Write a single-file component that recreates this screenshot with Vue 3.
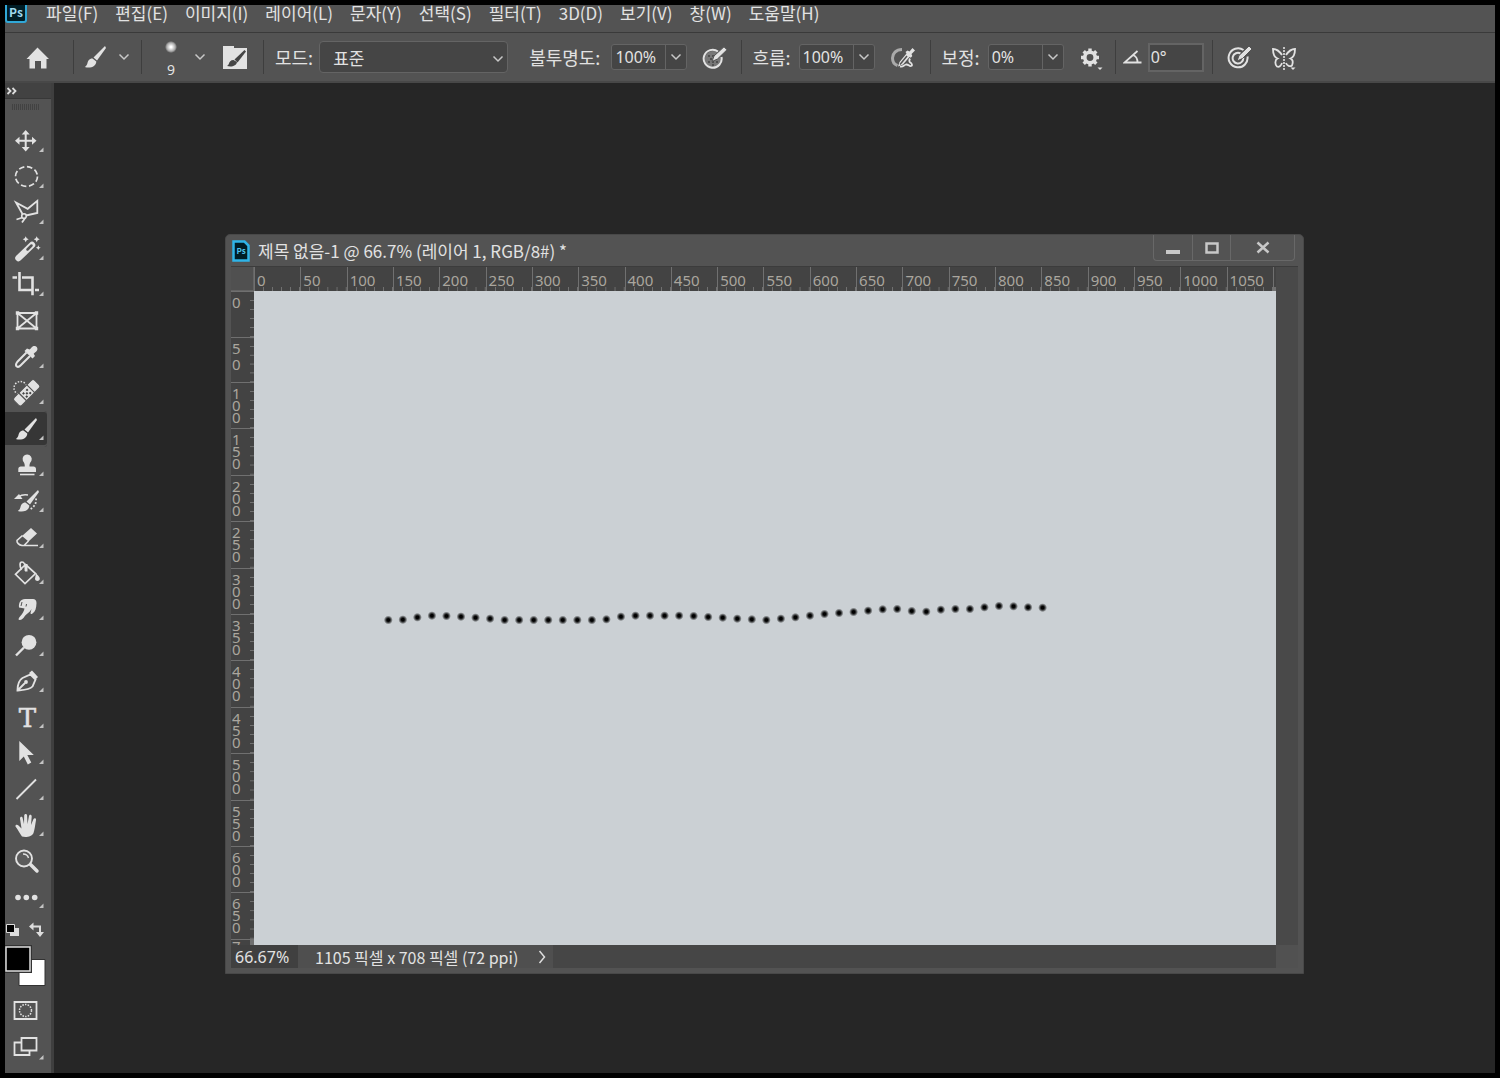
<!-- src/App.vue -->
<template>
  <div class="app">
    <nav class="menu-bar">
      <svg class="logo" viewBox="0 0 22 18">
        <rect x="1" y="-8" width="20" height="25" rx="2" fill="#001d26" stroke="#31a8d8" stroke-width="2" />
        <text x="11" y="12" text-anchor="middle" font-size="12" font-weight="700" fill="#9fd8ee">Ps</text>
      </svg>
      <button v-for="m in menus" :key="m" class="menu-item">{{ m }}</button>
    </nav>

    <div class="options-bar">
      <div class="group home">
        <button class="icon-btn" aria-label="홈">
          <svg class="icon" viewBox="0 0 26 26"><path d="M13.500 3.500 25 15h-2.500v9.500H17V17h-6v7.500H5.500V15H2.500z" /></svg>
        </button>
      </div>
      <div class="group tool">
        <button class="icon-btn" aria-label="브러시">
          <svg class="icon" viewBox="8 5 26 26" v-html="BRUSH"></svg>
        </button>
        <button class="chev" aria-label="도구 사전 설정"><svg viewBox="0 0 12 8"><path d="M1.500 1.500 6 6l4.500-4.500" /></svg></button>
      </div>
      <div class="group preset">
        <button class="brush-size"><span class="dot"></span>9</button>
        <button class="chev" aria-label="브러시 사전 설정"><svg viewBox="0 0 12 8"><path d="M1.500 1.500 6 6l4.500-4.500" /></svg></button>
        <button class="icon-btn folder" aria-label="브러시 설정">
          <svg class="icon" viewBox="0 0 26 26">
            <path d="M1 2h11v2h13v21H1z" />
            <path d="M22.500 6 12.500 15.500l3 3L24 7.500z" fill="#444" />
            <path d="M11.500 16c-3 0-4 2-4.500 3.500-.5 1.300-1 2-2 2.500 4.500 1.300 9.500 0 10-4z" fill="#444" />
          </svg>
        </button>
      </div>
      <div class="group mode">
        <label for="mode">모드:</label>
        <span class="select-wrap">
          <select id="mode"><option>표준</option></select>
          <svg class="select-arrow" viewBox="0 0 12 8"><path d="M1.500 1.500 6 6l4.500-4.500" /></svg>
        </span>
        <label for="opacity" class="opacity-label">불투명도:</label>
        <span class="combo">
          <input id="opacity" v-model="opacity">
          <button class="chev" aria-label="불투명도 슬라이더"><svg viewBox="0 0 12 8"><path d="M1.500 1.500 6 6l4.500-4.500" /></svg></button>
        </span>
        <button class="icon-btn" aria-label="불투명도에 압력 사용">
          <svg class="icon" viewBox="0 0 26 26">
            <circle cx="11" cy="15.500" r="8.500" fill="#777" />
            <path d="M16 7.500a9 9 0 1 0 3.500 5.500" fill="none" stroke="currentColor" stroke-width="2" />
            <path d="M6 12h2m2 0h2m-4 3h2m-4 3h2m2 0h2m2 0h2m-6 3h2" stroke="#444" stroke-width="1.500" />
            <path d="M10 17.500 12 12 22 2.800l3 3L15.500 15z" stroke="#535353" />
          </svg>
        </button>
      </div>
      <div class="group flow">
        <label for="flow">흐름:</label>
        <span class="combo">
          <input id="flow" v-model="flow">
          <button class="chev" aria-label="흐름 슬라이더"><svg viewBox="0 0 12 8"><path d="M1.500 1.500 6 6l4.500-4.500" /></svg></button>
        </span>
        <button class="icon-btn" aria-label="에어브러시">
          <svg class="icon" viewBox="0 0 26 26">
            <path d="M12 5.500C6 5.500 2.500 9.500 2.500 14c0 4 2 6.500 5 7.500" fill="none" stroke="#aaa" stroke-width="3" />
            <path d="M8 22.500 9.500 18l7-8.500-1-1.500 2-1.500 2 1L22.500 4l2.500 2.500-3.500 3.500.8 2-1.500 1.700-1.300-.7L13 20.500z" />
            <path d="m10 20.500 7-8.500" stroke="#535353" stroke-width="1.500" />
            <path d="M10 22.500c3 1 4-1.500 6-2 2.500-.3 3 2 5 1.500s.5-3-.8-3.500c-1.200-.8-1.200-2-.2-4" fill="none" stroke="currentColor" stroke-width="1.800" />
          </svg>
        </button>
      </div>
      <div class="group smooth">
        <label for="smooth">보정:</label>
        <span class="combo">
          <input id="smooth" v-model="smoothing">
          <button class="chev" aria-label="보정 슬라이더"><svg viewBox="0 0 12 8"><path d="M1.500 1.500 6 6l4.500-4.500" /></svg></button>
        </span>
        <button class="icon-btn" aria-label="보정 옵션">
          <svg class="icon" viewBox="0 0 26 26">
            <circle cx="11" cy="13.500" r="5.200" fill="none" stroke="currentColor" stroke-width="3.600" />
            <path d="M11 4.500v3m0 12v3M2 13.500h3m12 0h3M4.700 7.200l2 2m8.600 8.600 2 2m0-12.600-2 2m-8.600 8.600-2 2" stroke="currentColor" stroke-width="3.400" />
            <path d="M18.500 23.500h5L21 26z" />
          </svg>
        </button>
      </div>
      <div class="group angle">
        <label for="angle" aria-label="브러시 각도">
          <svg class="angle-icon" viewBox="0 0 20 26">
            <path d="M14.500 7 1.500 18.500h17M10 11c3 1 4.500 4 4.500 7.500" fill="none" stroke="currentColor" stroke-width="1.800" />
          </svg>
        </label>
        <input id="angle" v-model="angle" class="angle-input">
      </div>
      <div class="group last">
        <button class="icon-btn" aria-label="크기에 압력 사용">
          <svg class="icon" viewBox="0 0 26 26">
            <path d="M16.500 6a9.500 9.500 0 1 0 4 6.500M13.500 9.500a5.300 5.300 0 1 0 2.700 4" fill="none" stroke="currentColor" stroke-width="2" />
            <path d="M10 17 12 11.500 22 2l3 3-9.500 9.500z" stroke="#535353" />
          </svg>
        </button>
        <button class="icon-btn" aria-label="대칭 옵션">
          <svg class="icon" viewBox="0 0 26 26">
            <path d="M10 11C7 6.500 4 5 1 5c0 4 .5 8 4.500 9.500C2.500 16 3 21 5 22.500c2 1 4-.5 5-3.500M14 11c3-4.500 6-6 9-6 0 4-.5 8-4.500 9.500 3 1.500 2.500 4.500 1.500 7-2 1.500-5 .5-6-2.500" fill="none" stroke="currentColor" stroke-width="1.800" />
            <path d="M12 3v23" stroke="currentColor" stroke-width="1.600" stroke-dasharray="2 1" />
            <path d="M18.500 23.500h5L21 26z" />
          </svg>
        </button>
      </div>
    </div>

    <div class="workspace">
      <aside class="toolbar">
        <button class="expand" aria-label="패널 확장">
          <svg viewBox="0 0 12 8"><path d="m1.500 1 3 3-3 3m5-6 3 3-3 3" fill="none" stroke="#ddd" stroke-width="1.800" /></svg>
        </button>
        <div class="grip"></div>
        <button
          v-for="tool in tools"
          :key="tool.name"
          :class="['tool-btn', { active: tool.name === activeTool }]"
          :aria-label="tool.name"
          @click="activeTool = tool.name"
        >
          <svg viewBox="0 0 42 36">
            <g v-html="tool.icon"></g>
            <path v-if="!tool.single" d="M38.500 29v-4.500l-4.500 4.500z" fill="#c4c4c4" />
          </svg>
        </button>
        <svg class="swatches" viewBox="0 0 46 78">
          <path d="M5 13h9v8H5z" fill="#ddd" />
          <path d="M1.500 9.500h8v8h-8z" fill="#000" stroke="#ddd" />
          <path d="M27 11.500h8V18" fill="none" stroke="#ddd" stroke-width="2" />
          <path d="m28.500 7.500-4.500 4 4.500 4zM31 17h8l-4 5z" fill="#ddd" />
          <path d="M14 44.500h26v26H14z" fill="#fff" stroke="#333" />
          <path d="M.5 31.500h25v25H.5z" fill="#000" stroke="#333" stroke-width="3" />
          <path d="M1 32h24v24H1z" fill="#000" stroke="#ddd" stroke-width="1.500" />
        </svg>
        <button class="tool-btn" aria-label="빠른 마스크">
          <svg viewBox="0 0 42 36">
            <path d="M9.500 9h22v17h-22z" fill="none" stroke="currentColor" stroke-width="1.800" />
            <circle cx="20.500" cy="17.500" r="6" fill="none" stroke="currentColor" stroke-width="1.500" stroke-dasharray="1.500 1.200" />
          </svg>
        </button>
        <button class="tool-btn" aria-label="화면 모드">
          <svg viewBox="0 0 42 36">
            <path d="M9.500 13.500h15V26h-15z" fill="none" stroke="currentColor" stroke-width="1.800" />
            <path d="M16.500 9h15v12.500h-15z" fill="#484848" stroke="currentColor" stroke-width="1.800" />
            <path d="M38.500 30.500V26L34 30.500z" fill="#c4c4c4" />
          </svg>
        </button>
      </aside>

      <main class="desk">
        <section class="doc">
          <header class="doc-title">
            <svg class="doc-logo" viewBox="0 0 18 22">
              <path d="M1.500 1.500h11l4 4v15h-15z" fill="#001d26" stroke="#2fb4e8" stroke-width="2.500" />
              <text x="9" y="14" text-anchor="middle" font-size="8" font-weight="700" fill="#4fc3ee">Ps</text>
            </svg>
            <h1>제목 없음-1 @ 66.7% (레이어 1, RGB/8#) *</h1>
            <div class="win-btns">
              <button aria-label="최소화"><svg viewBox="0 0 14 14"><path d="M0 9h14v4H0z" /></svg></button>
              <button aria-label="최대화"><svg viewBox="0 0 14 14"><path d="M1.500 2.500h11v9h-11z" fill="none" stroke="#c8c8c8" stroke-width="2.500" /></svg></button>
              <button class="close" aria-label="닫기"><svg viewBox="0 0 14 14"><path d="m1.500 1.500 11 10m0-10-11 10" stroke="#c8c8c8" stroke-width="2.500" /></svg></button>
            </div>
          </header>

          <div class="doc-body">
            <div class="corner"></div>
            <div class="ruler-h">
              <span v-for="n in 22" :key="n" class="seg">{{ (n - 1) * 50 }}</span>
              <span class="seg end"></span>
            </div>
            <div class="scroll-v"></div>
            <div class="ruler-v">
              <span v-for="n in 14" :key="n" :class="['seg', { wide: n === 2 }]">
                <i v-for="(d, k) in String((n - 1) * 50)" :key="k">{{ d }}</i>
              </span>
              <span class="seg end"><i>7</i></span>
            </div>
            <svg class="canvas" viewBox="0 0 1022 654">
              <defs>
                <radialGradient id="soft">
                  <stop offset="0.300" stop-color="#000" />
                  <stop offset="0.550" stop-color="#000" stop-opacity="0.700" />
                  <stop offset="1" stop-color="#000" stop-opacity="0" />
                </radialGradient>
              </defs>
              <circle v-for="(y, i) in stroke" :key="i" :cx="134.3 + i * 14.54" :cy="299 + y / 3" r="4.500" fill="url(#soft)" />
            </svg>
          </div>

          <footer class="status">
            <input v-model="zoom" class="zoom" aria-label="확대/축소">
            <div class="info">
              <span>1105 픽셀 x 708 픽셀 (72 ppi)</span>
              <button aria-label="문서 정보"><svg viewBox="0 0 8 14"><path d="m1.500 1 5 6-5 6" fill="none" stroke="#ddd" stroke-width="1.500" /></svg></button>
            </div>
            <div class="scroll-h"></div>
            <div class="resize"></div>
          </footer>
        </section>
      </main>
    </div>
  </div>
</template>

<script setup>
import { ref } from 'vue'

const menus = ['파일(F)', '편집(E)', '이미지(I)', '레이어(L)', '문자(Y)', '선택(S)', '필터(T)', '3D(D)', '보기(V)', '창(W)', '도움말(H)']

const opacity = ref('100%')
const flow = ref('100%')
const smoothing = ref('0%')
const angle = ref('0°')
const zoom = ref('66.67%')
const activeTool = ref('브러시')

// outline helper for icons drawn with strokes
const line = (d, w = 1.8, extra = '') =>
  `<path d="${d}" fill="none" stroke="currentColor" stroke-width="${w}" ${extra}/>`

const BRUSH = '<path d="M31 7 19.500 18.500l3.500 3L32 9z"/><path d="M18.500 19.500c-3.500 0-4.500 2.500-5 4.500-.4 1.800-1.200 3-2.700 4 5.500 1.700 11.500-.5 11.500-5.500z"/>'

const tools = [
  { name: '이동', icon: line('M20.700 11v14M14 17.800h14', 2) + '<path d="m20.700 7 4 4.500h-8zm0 21.500 4-4.500h-8zM10 17.800l4.500-4v8zm21.500 0-4.500-4v8z"/>' },
  { name: '원형 선택', icon: '<ellipse cx="21.500" cy="17.500" rx="11" ry="9.800" fill="none" stroke="currentColor" stroke-width="1.700" stroke-dasharray="5.500 2.700"/>' },
  { name: '다각형 올가미', icon: line('M17.500 19 11 7.500l11.700 6.300 9.600-8V18L21 20.500M17.500 22.500l-6 2M20.500 22.500l-3.500 5') + '<circle cx="19" cy="21" r="2.300" fill="#535353" stroke="currentColor" stroke-width="1.600"/>' },
  { name: '자동 선택', icon: line('M13.500 27 27 14', 6.5, 'stroke-linecap="round"') + '<path d="m22.500 18.500 4-4" stroke="#535353" stroke-width="2.500" stroke-linecap="round"/><path d="m20.700 5.300 1 2 2 1-2 1-1 2-1-2-2-1 2-1zm11 0 1 2 2 1-2 1-1 2-1-2-2-1 2-1zm1.600 9 .8 1.600 1.600.8-1.600.8-.8 1.600-.8-1.600-1.600-.8 1.600-.8z"/>' },
  { name: '자르기', icon: line('M7.500 10.500H12M14.500 5v18h12M17 10.500h10.500v17.800M30 23h4', 2.6) },
  { name: '프레임', single: true, icon: line('M12.500 10h19v15.500h-19zl19 15.500m0-15.500-19 15.500', 1.8) + '<path d="M10.800 8.300h3.400v3.400h-3.400zm19 0h3.400v3.400h-3.400zm0 15.500h3.400v3.400h-3.400zm-19 0h3.400v3.400h-3.400z"/>' },
  { name: '스포이드', icon: line('m21.500 13.500-9.300 9.500c-1 1.300-1.700 3-.7 4.300 1.300 1 3 .3 4-.8l9.500-9.500', 2) + '<path d="m19.500 12 2.500-2.500 2.500 1c1.500-1 2-2.500 3.500-3.300 3-1.200 5.500 1.700 4 4.200-.8 1.300-2.500 2-3.300 3.300l1.300 2.300-2.500 2.500z"/>' },
  { name: '복구 브러시', icon: '<circle cx="15.500" cy="13" r="6.500" fill="none" stroke="currentColor" stroke-width="1.500" stroke-dasharray="1.500 1.500"/><g transform="rotate(-45 21.700 17.800)"><rect x="7.200" y="12.300" width="29" height="11" rx="2.500" stroke="#535353"/><path d="M16 12v12m11.400-12v12" stroke="#535353" stroke-width="1.200"/><path d="M18 15h2v2h-2zm5 0h2v2h-2zm-2.500 2.300h2v2h-2zM18 19.500h2v2h-2zm5 0h2v2h-2z" fill="#444"/></g>' },
  { name: '브러시', icon: BRUSH },
  { name: '도장', icon: '<path d="M22.300 7.500a4.500 4.500 0 0 1 4.200 6c-.8 1.800-2 2.500-2 6h4c1.500 0 2.500 1 2.500 2.500V25H13.300v-3c0-1.500 1-2.500 2.500-2.500h4c0-3.500-1.200-4.200-2-6a4.500 4.500 0 0 1 4.500-6z"/>' + line('M15 27.500h14.500', 1.6) },
  { name: '작업 내역 브러시', icon: '<g transform="translate(2 0)">' + BRUSH + '</g><path d="m9 16 5-5 3.500 5z"/>' + line('M14 13.500c2-1.500 5-2 9-1.500', 1.5) + line('M31 15.500c.5 4-1 8-6 11', 1.8, 'stroke-dasharray="1.800 1.800"') },
  { name: '지우개', icon: '<path d="M26 9l6 5.500-8.500 8L17 17z"/>' + line('m17.500 16.500-5.500 5c-.5 2 2 4.500 5 5h16M23.500 22l-4 4', 1.6) },
  { name: '페인트 통', icon: line('M20.500 9.500 10.500 19.300 20 28.500l10.500-10zM16.500 15c-2-4-2-8 .5-8 2 0 3.500 3 3.500 9', 1.7) + '<path d="M20 9h2.500v7.500H20z"/><path d="M31 18c1 2 4 3.500 3.800 6-.3 2.500-4.500 2.500-4.800 0z"/>' },
  { name: '손가락', icon: '<path d="M14 16.500c-.5-5 1.500-8 6-8.500h8c2 0 3.500 1.500 3.500 4-.2 5-1 8.500-4 10.500-1.500 1-2 .5-2-.5l1-4c-2 4-5 4.500-7 7.500-1 1.500-2.500 3.500-5 3.500-2-.5-.5-2 .5-3.500 2.500-3 4-5 4.500-8l-2.500-.5z"/><path d="m17 11-1 4m5 .5.500-2.500" stroke="#535353" fill="none"/>' },
  { name: '닷지', icon: '<circle cx="24" cy="15.300" r="7.400"/>' + line('M19 20.500 11 28.500', 2.4) },
  { name: '펜', icon: line('M12.500 27.500c0-6 1-10 5-12.500l8-3.500 5 5-3 7c-3 3.500-9 3.500-15 4zM13 27l7-7', 1.9) + '<circle cx="21" cy="19" r="1.900"/><path d="m24 10 3-2.500 6 6.500-2.500 2.500z"/>' },
  { name: '문자', icon: '<text x="22.500" y="27.500" text-anchor="middle" font-family="DejaVu Serif, serif" font-size="26" stroke="currentColor" stroke-width="0.500">T</text>' },
  { name: '패스 선택', icon: '<path d="M14.300 6v20l4.500-4.500 4 8 3.500-2-4-7.500h6.500z"/>' },
  { name: '선', icon: line('M11.500 28 31 8.500', 1.8) },
  { name: '손', icon: '<path d="M17 29.500c-2-2.500-4-7-6.500-10-.5-1.500 1.500-2.300 3-1l3 3-1.500-10c0-2 2.300-2.300 2.700-.3L19 17l.2-8.500c.2-2 2.800-2 2.900 0L22.500 17l1.500-8c.5-1.800 2.800-1.500 2.700.5L26 18l2.500-6c.8-1.500 2.900-1 2.500 1-1 6-1.500 10-2.500 13-1.500 4-8 4.500-11.500 3.500z"/>' },
  { name: '돋보기', single: true, icon: line('M25.500 21.500 32 28', 3.5, 'stroke-linecap="round"') + '<circle cx="19" cy="15.500" r="8" fill="#5c5c5c" stroke="currentColor" stroke-width="1.900"/>' + line('M18 11c3 0 5 2 5.500 4', 1.4) },
  { name: '도구 모음 편집', icon: '<circle cx="13" cy="18.500" r="2.800"/><circle cx="21.300" cy="18.500" r="2.800"/><circle cx="29.700" cy="18.500" r="2.800"/>' },
]

// height of every brush dab along the painted line
const stroke = [
  90, 89, 82, 77, 78, 80, 83, 86, 90, 90, 90, 90, 90, 90, 90, 88, 80, 77, 77, 77, 77, 78, 81,
  83, 86, 88, 90, 86, 82, 77, 72, 69, 66, 62, 58, 57, 63, 65, 59, 57, 57, 52, 48, 49, 52, 53,
]
</script>

<style>
body { background: #000; }
</style>

<style scoped>
.app {
  display: flex; flex-direction: column; box-sizing: border-box;
  height: 100vh; border: 5px solid #000;
  background: #262626; color: #e2e2e2;
  font-family: "Noto Sans CJK KR", sans-serif; font-size: 17px;
}
button, input, select { font: inherit; color: inherit; margin: 0; padding: 0; border: none; background: none; border-radius: 0; box-sizing: border-box; }
svg { display: block; }

.menu-bar {
  display: flex; gap: 17px; height: 27px; flex-shrink: 0; overflow: hidden;
  background: #535353; border-bottom: 1px solid #3a3a3a;
}
.logo { width: 22px; height: 18px; margin-right: 2px; }
.menu-item { height: 16px; line-height: 16px; white-space: nowrap; }

.options-bar {
  display: flex; align-items: center; height: 48px; flex-shrink: 0;
  background: #535353; border-bottom: 2px solid #484848;
}
.group { display: flex; align-items: center; height: 34px; border-left: 1px solid #3e3e3e; flex-shrink: 0; }
.group label { font-size: 18px; line-height: 24px; white-space: nowrap; }
.home { border-left: none; padding: 0 23px 0 19px; }
.tool { gap: 10px; padding: 0 11px 0 8px; }
.preset { gap: 10px; padding: 0 15px 0 16px; }
.folder { margin-left: 6px; }
.mode { padding: 0 13px 0 11px; }
.opacity-label { margin-right: 3px; }
.flow { padding: 0 14px 0 10px; }
.smooth { padding: 0 10px 0 11px; }
.angle { gap: 5px; padding: 0 8px 0 7px; }
.last { gap: 19px; padding-left: 14px; }
.icon, .icon-btn { width: 26px; height: 26px; }
.icon, .angle-icon, .tool-btn svg { fill: currentColor; }
.angle-icon { width: 20px; height: 26px; }
.chev { width: 12px; height: 24px; display: flex; align-items: center; justify-content: center; }
.chev svg, .select-arrow { width: 12px; height: 8px; fill: none; stroke: #c8c8c8; stroke-width: 1.5; }
.brush-size {
  width: 26px; display: flex; flex-direction: column; align-items: center; gap: 10px;
  font-family: "Noto Sans", sans-serif; font-size: 14px; line-height: 14px; padding-top: 4px;
}
.dot { width: 12px; height: 12px; flex-shrink: 0; border-radius: 50%; background: radial-gradient(#fff 10%, #aaa 50%, transparent 72%); }
.select-wrap { position: relative; margin: 0 21px 0 6px; }
.select-wrap select {
  display: block; width: 189px; height: 32px; padding-left: 13px; appearance: none;
  background: #454545; border: 1px solid #646464; border-radius: 4px;
}
.select-arrow { position: absolute; right: 4px; top: 14px; pointer-events: none; }
.combo { display: flex; height: 26px; box-sizing: border-box; margin: 0 15px 0 8px; background: #454545; border: 1px solid #646464; border-radius: 3px; }
.combo input { width: 53px; padding-left: 3px; font-family: "Noto Sans", sans-serif; font-size: 16px; }
.combo .chev { width: 21px; border-left: 1px solid #646464; }
.angle-input { width: 56px; height: 29px; padding-left: 1px; background: #454545; border: 2px solid #646464; font-family: "Noto Sans", sans-serif; font-size: 16px; }

.workspace { flex: 1; display: flex; min-height: 0; }
.toolbar {
  width: 49px; flex-shrink: 0; box-sizing: border-box; overflow: hidden;
  display: flex; flex-direction: column; align-items: flex-start;
  background: #535353; border-right: 3px solid #3f3f3f;
}
.expand { width: 100%; height: 16px; padding-left: 1px; background: #424242; border-bottom: 1px solid #383838; flex-shrink: 0; }
.expand svg { width: 12px; height: 8px; }
.grip { width: 28px; height: 6px; margin: 5px 0 13px 7px; flex-shrink: 0; background: repeating-linear-gradient(to right, #424242 0 1px, #535353 1px 2px); }
.tool-btn { width: 42px; height: 36px; flex-shrink: 0; border-radius: 0 3px 3px 0; }
.tool-btn svg { width: 42px; height: 36px; }
.tool-btn.active { background: #363636; box-shadow: inset 0 1px #535353, inset 0 -2px #535353; }
.swatches { width: 46px; height: 78px; flex-shrink: 0; }

.desk { flex: 1; position: relative; min-width: 0; }
.doc {
  position: absolute; inset: 151px 191px 99px 171px; box-sizing: border-box;
  display: flex; flex-direction: column; padding: 0 5px 5px;
  background: #535353; border: 1px solid #484848; border-radius: 5px 5px 0 0;
}
.doc-title { display: flex; align-items: flex-start; height: 31px; flex-shrink: 0; border-bottom: 1px solid #3c3c3c; }
.doc-logo { width: 18px; height: 22px; margin: 5px 8px 0 1px; }
.doc-title h1 { flex: 1; margin: 0; font-size: 17px; font-weight: 400; line-height: 32px; white-space: nowrap; }
.win-btns { display: flex; margin-right: 3px; border: 1px solid #686868; border-top: none; border-radius: 0 0 4px 4px; }
.win-btns button { width: 38px; height: 25px; display: flex; align-items: center; justify-content: center; }
.win-btns button + button { border-left: 1px solid #686868; }
.win-btns .close { width: 64px; }
.win-btns svg { width: 14px; height: 14px; fill: #c8c8c8; }

.doc-body { flex: 1; min-height: 0; display: grid; grid-template: 24px 1fr / 23px 1fr 22px; background: #484848; }
.corner { background: #505050; border-right: 1px solid #646464; border-bottom: 1px solid #646464; }
.ruler-h, .ruler-v { display: flex; overflow: hidden; background: #434343; color: #aaa69e; font-family: "Noto Sans", sans-serif; font-size: 15px; }
.seg { box-sizing: border-box; min-width: 0; min-height: 0; flex: 1 1 0; }
.ruler-h .seg {
  padding-left: 2px; line-height: 26px; border-left: 1px solid #707070;
  background: linear-gradient(to right, #707070 1px, transparent 1px) 8px 100% / 20% 4px repeat-x;
}
.ruler-h .end { flex: 0 0 3px; padding: 0; }
.ruler-v { flex-direction: column; }
.ruler-v .seg {
  display: flex; flex-direction: column; padding: 4px 0 0 1px; border-top: 1px solid #707070;
  background: linear-gradient(to bottom, #707070 1px, transparent 1px) 100% 8px / 4px 20% repeat-y;
}
.ruler-v .end { flex: 0 0 6px; padding: 0 0 0 1px; }
.ruler-v i { font-style: normal; line-height: 12px; }
.ruler-v .wide { padding-top: 2px; }
.ruler-v .wide i { line-height: 16px; }
.scroll-v { grid-area: 1 / 3 / 3 / 4; background: #494949; }
.canvas { width: 100%; height: 100%; background: #cbd0d4; }

.status { display: flex; height: 23px; flex-shrink: 0; background: #464646; }
.zoom { width: 67px; padding-left: 4px; background: #404040; font-family: "Noto Sans", sans-serif; font-size: 16px; }
.info { display: flex; align-items: center; gap: 20px; width: 255px; box-sizing: border-box; padding-left: 17px; background: #4f4f4f; font-size: 16px; white-space: nowrap; line-height: 22px; }
.info svg { width: 8px; height: 14px; }
.scroll-h { flex: 1; }
.resize { width: 22px; background: #515151; }
</style>
